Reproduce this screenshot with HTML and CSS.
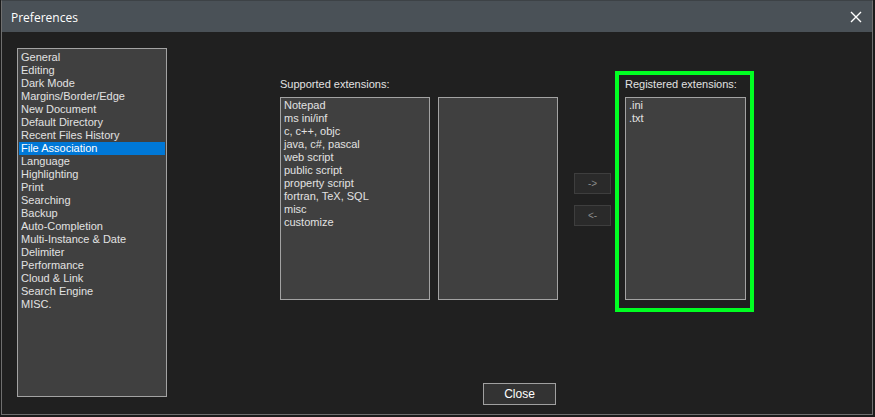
FILE: index.html
```html
<!DOCTYPE html>
<html>
<head>
<meta charset="utf-8">
<link rel="stylesheet" href="styles.css">
</head>
<body>
<div class="window">
  <div class="titlebar">
    <span class="title">Preferences</span>
    <svg class="close-x" width="12" height="12" viewBox="0 0 12 12"><path d="M1 1 L11 11 M11 1 L1 11" stroke="#ffffff" stroke-width="1.4" fill="none"/></svg>
  </div>
  <div class="content">
    <div class="listbox nav">
      <div class="item">General</div>
      <div class="item">Editing</div>
      <div class="item">Dark Mode</div>
      <div class="item">Margins/Border/Edge</div>
      <div class="item">New Document</div>
      <div class="item">Default Directory</div>
      <div class="item">Recent Files History</div>
      <div class="item selected">File Association</div>
      <div class="item">Language</div>
      <div class="item">Highlighting</div>
      <div class="item">Print</div>
      <div class="item">Searching</div>
      <div class="item">Backup</div>
      <div class="item">Auto-Completion</div>
      <div class="item">Multi-Instance &amp; Date</div>
      <div class="item">Delimiter</div>
      <div class="item">Performance</div>
      <div class="item">Cloud &amp; Link</div>
      <div class="item">Search Engine</div>
      <div class="item">MISC.</div>
    </div>
    <div class="panel">
      <div class="group">
        <div class="supported">
          <div class="label">Supported extensions:</div>
          <div class="lists">
            <div class="listbox ext">
              <div class="item">Notepad</div>
              <div class="item">ms ini/inf</div>
              <div class="item">c, c++, objc</div>
              <div class="item">java, c#, pascal</div>
              <div class="item">web script</div>
              <div class="item">public script</div>
              <div class="item">property script</div>
              <div class="item">fortran, TeX, SQL</div>
              <div class="item">misc</div>
              <div class="item">customize</div>
            </div>
            <div class="listbox sub"></div>
          </div>
        </div>
        <div class="arrows">
          <div class="arrow-btn">-&gt;</div>
          <div class="arrow-btn">&lt;-</div>
        </div>
        <div class="registered">
          <div class="label">Registered extensions:</div>
          <div class="listbox reg">
            <div class="item">.ini</div>
            <div class="item">.txt</div>
          </div>
        </div>
      </div>
      <div class="close-btn">Close</div>
    </div>
  </div>
</div>
</body>
</html>
```
FILE: styles.css
```css
html, body {
  margin: 0;
  padding: 0;
  background: #1b1b1b;
}
body {
  width: 875px;
  height: 417px;
  font-family: "Liberation Sans", Arial, sans-serif;
  font-size: 11px;
  color: #e2e2e2;
}
.window {
  margin-left: 1px;
  width: 870px;
  height: 413px;
  border: 1px solid #6f6f6f;
  border-top-color: #3d4246;
  background: #202020;
}
.titlebar {
  height: 31px;
  background: #4a5157;
  display: flex;
  align-items: center;
  justify-content: space-between;
  padding: 0 10px 0 9px;
}
.title {
  font-family: "Open Sans", "Liberation Sans", sans-serif;
  font-size: 12px;
  color: #ffffff;
  margin-top: 1px;
}
.close-x {
  margin-right: 0px;
}
.content {
  display: flex;
  align-items: flex-start;
  padding: 16px 0 0 15px;
}
.listbox {
  box-sizing: border-box;
  border: 1px solid #a3a3a3;
  background: #404040;
  padding: 2px 1px;
}
.item {
  height: 13px;
  line-height: 13px;
  padding-left: 2px;
  white-space: nowrap;
}
.item.selected {
  background: #0078d7;
  color: #ffffff;
}
.nav {
  width: 150px;
  height: 349px;
}
.panel {
  margin-left: 113px;
  margin-top: 23px;
  display: flex;
  flex-direction: column;
  align-items: flex-start;
}
.group {
  display: flex;
  align-items: flex-start;
}
.label {
  height: 13px;
  line-height: 13px;
  margin-bottom: 6px;
  white-space: nowrap;
}
.supported {
  padding-top: 7px;
}
.lists {
  display: flex;
  gap: 8px;
}
.ext {
  width: 150px;
  height: 203px;
  padding-top: 1px;
}
.sub {
  width: 120px;
  height: 203px;
}
.arrows {
  margin-left: 16px;
  margin-top: 102px;
  display: flex;
  flex-direction: column;
  gap: 11px;
}
.arrow-btn {
  box-sizing: border-box;
  width: 37px;
  height: 21px;
  border: 1px solid #3e3e3e;
  background: #2a2a2a;
  color: #8a8a8a;
  font-size: 10px;
  display: flex;
  align-items: center;
  justify-content: center;
}
.registered {
  margin-left: 4px;
  box-sizing: border-box;
  width: 139px;
  height: 241px;
  border: 4px solid #00ff22;
  padding: 3px 4px 0 6px;
}
.reg {
  width: 121px;
  height: 203px;
  padding-top: 1px;
}
.close-btn {
  margin-top: 71px;
  margin-left: 203px;
  box-sizing: border-box;
  width: 73px;
  height: 22px;
  border: 1px solid #a0a0a0;
  background: #333333;
  color: #ffffff;
  font-size: 12px;
  display: flex;
  align-items: center;
  justify-content: center;
}
```
